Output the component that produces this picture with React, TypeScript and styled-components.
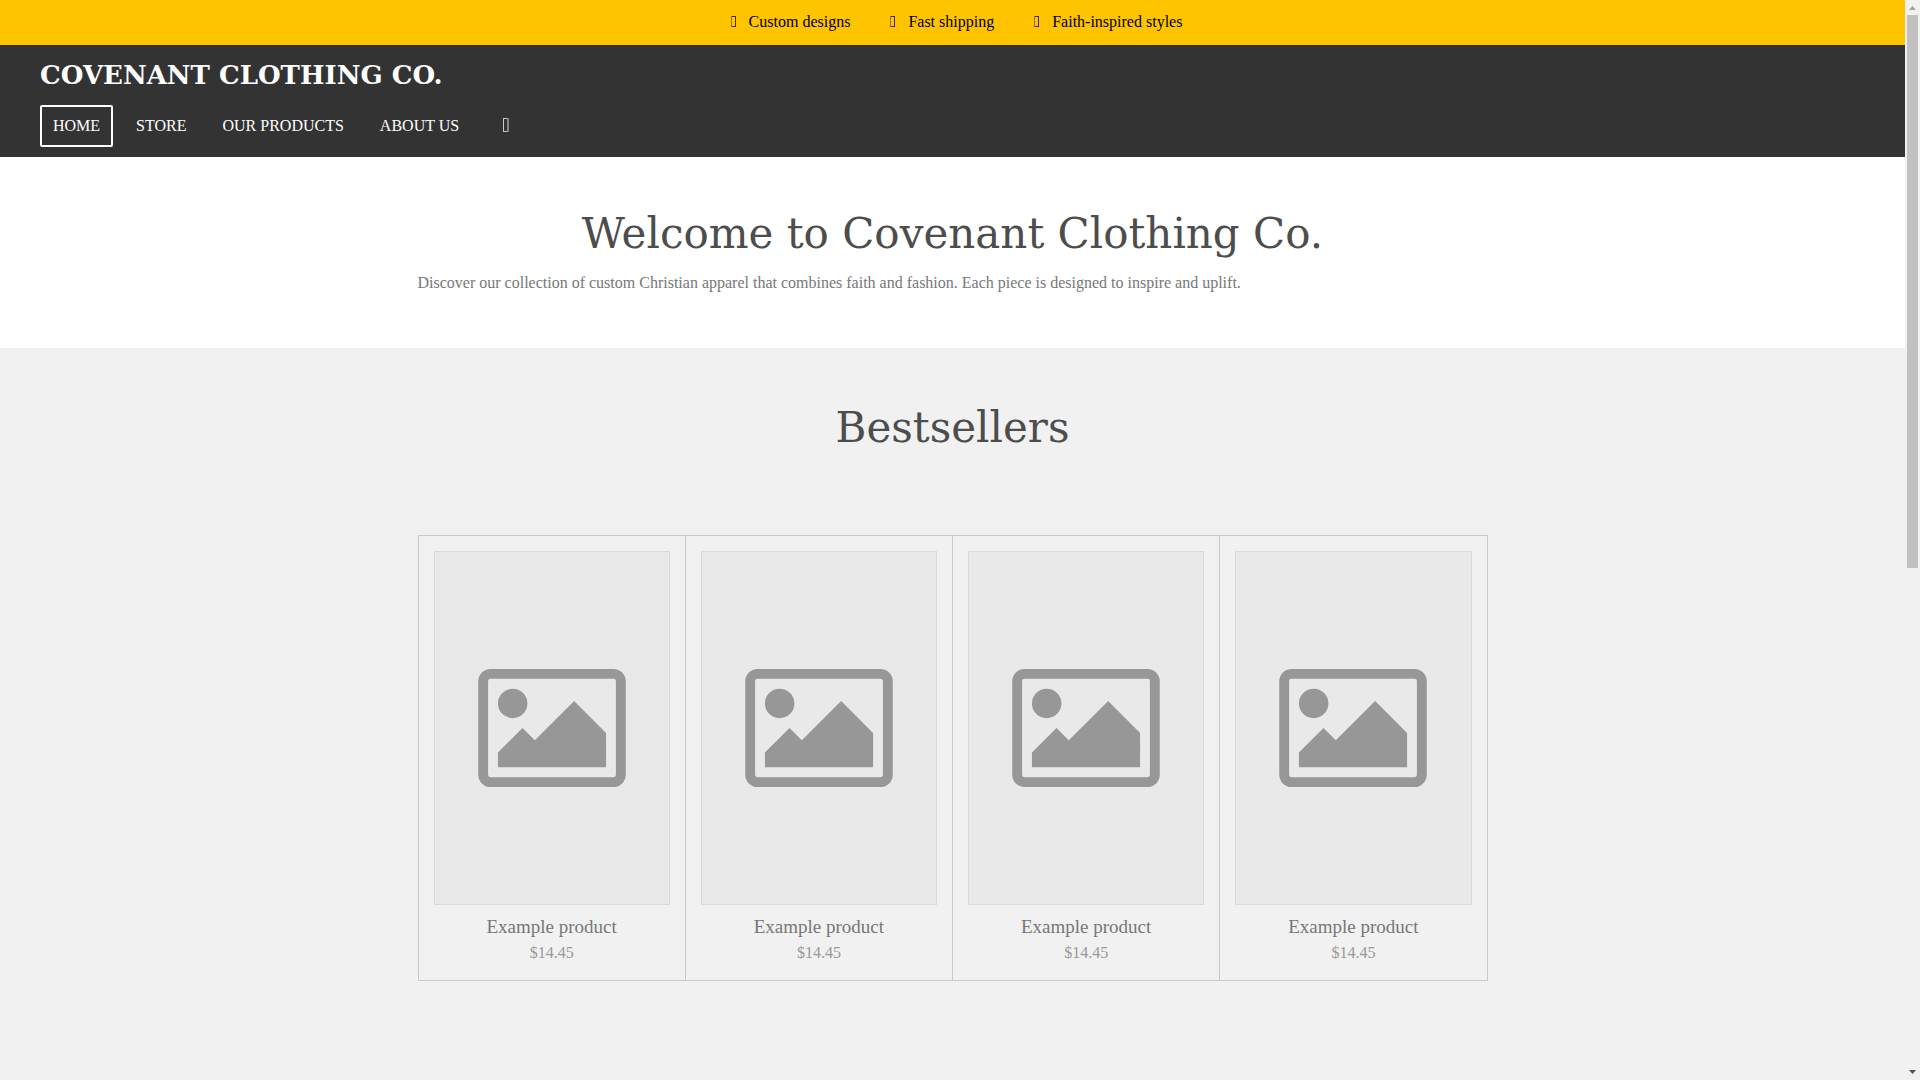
import React from "react";
import styled, { createGlobalStyle } from "styled-components";

const GlobalStyle = createGlobalStyle`
  *, *::before, *::after { box-sizing: border-box; }
  body { margin: 0; }
  h1, h2, h3, p, ul { margin: 0; padding: 0; font-weight: normal; }
  ul { list-style: none; }
  a { color: inherit; text-decoration: none; }
`;

const serif = `"Liberation Serif", "Times New Roman", serif`;
const display = `"DejaVu Serif", Georgia, serif`;

const Shell = styled.div`
  display: flex;
  height: 100vh;
  overflow: hidden;
  background: #f1f1f1;
  font-family: ${serif};
  font-size: 16px;
  line-height: 26px;
  color: #777777;
`;

const Page = styled.div`
  flex: 1;
  min-width: 0;
`;

const UspBar = styled.ul`
  display: flex;
  justify-content: center;
  gap: 32px;
  padding: 9px 0 10px;
  background: #ffc400;
  color: #000000;
`;

const Usp = styled.li`
  display: flex;
  align-items: center;
  gap: 10px;
`;

const Header = styled.header`
  padding: 12px 40px 10px;
  background: #333333;
  color: #ffffff;
`;

const Brand = styled.a`
  display: block;
  font-family: ${display};
  font-size: 26px;
  font-weight: bold;
  line-height: 36px;
`;

const Nav = styled.nav`
  display: flex;
  gap: 10px;
  margin-top: 12px;
`;

const NavLink = styled.a<{ $active?: boolean }>`
  padding: 8px 11px;
  border: 2px solid ${(p) => (p.$active ? "#ffffff" : "transparent")};
  border-radius: 2px;
  line-height: 22px;
`;

const CartButton = styled.button`
  display: flex;
  align-items: center;
  justify-content: center;
  width: 46px;
  padding: 0;
  border: 0;
  background: none;
  color: #ffffff;
`;

const Section = styled.section<{ $tone: string }>`
  padding: 52px 0;
  background: ${(p) => p.$tone};
`;

const Intro = styled(Section)`
  padding-top: 49px;
`;

const Container = styled.div`
  width: 1070px;
  max-width: 100%;
  margin: 0 auto;
`;

const Heading = styled.h2`
  font-family: ${display};
  font-size: 42px;
  line-height: 56px;
  color: #4d4d4d;
  text-align: center;
`;

const Lead = styled.p`
  margin-top: 8px;
`;

const Products = styled.ul`
  display: grid;
  grid-template-columns: repeat(4, 1fr);
  margin-top: 79px;
  border: solid #c9c9c9;
  border-width: 1px 0 1px 1px;
`;

const Product = styled.li`
  padding: 15px 15px 14px;
  border-right: 1px solid #c9c9c9;
  text-align: center;
`;

const Thumb = styled.div`
  display: flex;
  align-items: center;
  justify-content: center;
  aspect-ratio: 2 / 3;
  border: 1px solid #d9d9d9;
  background: #e9e9e9;
  color: #979797;
`;

const ProductName = styled.h3`
  margin-top: 8px;
  font-size: 19px;
  line-height: 27px;
`;

const Price = styled.p`
  color: #999999;
`;

const Rail = styled.div`
  display: flex;
  flex-direction: column;
  align-items: center;
  width: 15px;
  background: #f1f1f1;
`;

const Arrow = styled.svg`
  display: block;
  width: 15px;
  height: 15px;
`;

const Track = styled.div`
  flex: 1;
  width: 11px;
`;

const Grip = styled.div`
  height: 553px;
  background: #c1c1c1;
`;

const usps = ["Custom designs", "Fast shipping", "Faith-inspired styles"];
const links = ["HOME", "STORE", "OUR PRODUCTS", "ABOUT US"];
const products = [1, 2, 3, 4].map((id) => ({ id, name: "Example product", price: "$14.45" }));

const UspIcon = () => (
  <svg width="16" height="16" viewBox="0 0 16 16" fill="currentColor" aria-hidden="true">
    <path d="M8 2H9V13H8Z" opacity="0.4" />
    <path d="M9 2H12V3H9ZM9 12H12V13H9ZM12 2H13V13H12Z" opacity="0.75" />
  </svg>
);

const CartIcon = () => (
  <svg width="20" height="20" viewBox="0 0 20 20" fill="currentColor" aria-hidden="true">
    <path d="M8 2H12V3H9V15H12V16H8Z" opacity="0.75" />
    <path d="M12 2H14V16H12Z" opacity="0.4" />
  </svg>
);

const PictureIcon = () => (
  <svg width="148" height="118" viewBox="0 0 1920 1536" fill="currentColor" aria-hidden="true">
    <path
      fillRule="evenodd"
      d="M160 0H1760A160 160 0 0 1 1920 160V1376A160 160 0 0 1 1760 1536H160A160 160 0 0 1 0 1376V160A160 160 0 0 1 160 0ZM160 128A32 32 0 0 0 128 160V1376A32 32 0 0 0 160 1408H1760A32 32 0 0 0 1792 1376V160A32 32 0 0 0 1760 128Z"
    />
    <circle cx="448" cy="448" r="192" />
    <path d="M1664 832V1280H256V1088L576 768L736 928L1248 416Z" />
  </svg>
);

export default function App() {
  return (
    <>
      <GlobalStyle />
      <Shell>
        <Page>
          <UspBar>
            {usps.map((text) => (
              <Usp key={text}>
                <UspIcon />
                <span>{text}</span>
              </Usp>
            ))}
          </UspBar>
          <Header>
            <Brand href="#">COVENANT CLOTHING CO.</Brand>
            <Nav>
              {links.map((label, i) => (
                <NavLink key={label} href="#" $active={i === 0}>
                  {label}
                </NavLink>
              ))}
              <CartButton type="button" aria-label="Cart">
                <CartIcon />
              </CartButton>
            </Nav>
          </Header>
          <Intro $tone="#ffffff">
            <Container>
              <Heading as="h1">Welcome to Covenant Clothing Co.</Heading>
              <Lead>
                Discover our collection of custom Christian apparel that combines faith and fashion. Each piece is
                designed to inspire and uplift.
              </Lead>
            </Container>
          </Intro>
          <Section $tone="#f1f1f1">
            <Container>
              <Heading>Bestsellers</Heading>
              <Products>
                {products.map((p) => (
                  <Product key={p.id}>
                    <a href="#">
                      <Thumb>
                        <PictureIcon />
                      </Thumb>
                      <ProductName>{p.name}</ProductName>
                    </a>
                    <Price>{p.price}</Price>
                  </Product>
                ))}
              </Products>
            </Container>
          </Section>
        </Page>
        <Rail aria-hidden="true">
          <Arrow viewBox="0 0 15 15" fill="#a3a3a3">
            <path d="M4 10L7.5 6L11 10Z" />
          </Arrow>
          <Track>
            <Grip />
          </Track>
          <Arrow viewBox="0 0 15 15" fill="#505050">
            <path d="M4 5L7.5 9L11 5Z" />
          </Arrow>
        </Rail>
      </Shell>
    </>
  );
}
